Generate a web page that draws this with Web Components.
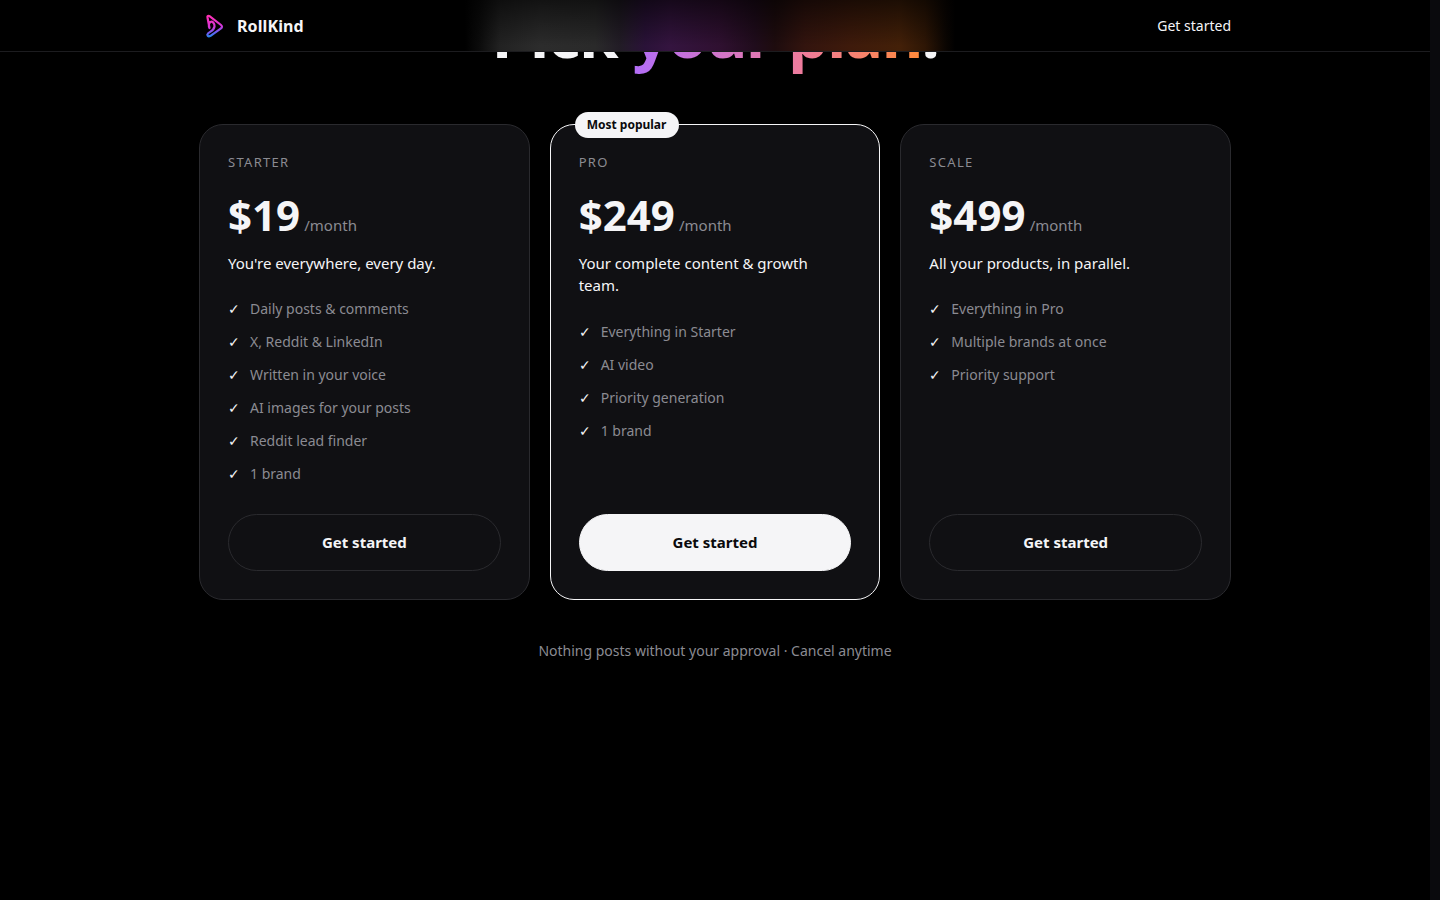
<!DOCTYPE html>
<html lang="en">
<head>
<meta charset="utf-8">
<title>RollKind pricing</title>
<style>
html,body{margin:0;padding:0;height:100%;background:#000;overflow:hidden}
body{font-family:"Noto Sans",sans-serif;color:#f5f5f7}
</style>
</head>
<body>
<rk-page>
  <rk-header slot="header"></rk-header>
  <rk-hero>Pick <span slot="accent">your plan</span></rk-hero>
  <rk-plans>
    <rk-plan name="STARTER" price="$19" tagline="You're everywhere, every day.">
      <li>Daily posts &amp; comments</li><li>X, Reddit &amp; LinkedIn</li><li>Written in your voice</li><li>AI images for your posts</li><li>Reddit lead finder</li><li>1 brand</li>
    </rk-plan>
    <rk-plan featured name="PRO" price="$249" tagline="Your complete content &amp; growth team.">
      <li>Everything in Starter</li><li>AI video</li><li>Priority generation</li><li>1 brand</li>
    </rk-plan>
    <rk-plan name="SCALE" price="$499" tagline="All your products, in parallel.">
      <li>Everything in Pro</li><li>Multiple brands at once</li><li>Priority support</li>
    </rk-plan>
  </rk-plans>
  <rk-note>Nothing posts without your approval · Cancel anytime</rk-note>
</rk-page>
<script>
function def(name, html, init){
  customElements.define(name, class extends HTMLElement{
    constructor(){super();this.attachShadow({mode:'open'}).innerHTML=html;}
    connectedCallback(){ if(init) init(this); }
  });
}
def('rk-page',`<style>
:host{display:flex;height:900px;width:1440px;overflow:hidden;background:#000}
.view{position:relative;width:1430px;height:900px;overflow:hidden;flex:none}
.bar{width:10px;flex:none;background:#0a0a0d}
</style><div class="view"><slot name="header"></slot><slot></slot></div><div class="bar"></div>`);

def('rk-header',`<style>
:host{position:absolute;left:0;top:0;right:0;z-index:5;display:block;height:51px;border-bottom:1px solid #1c1c1f;
background:
linear-gradient(to bottom,rgba(0,0,0,.58),rgba(0,0,0,0) 90%),
linear-gradient(90deg,#000 465px,#0c0c0c 480px,#222 500px,#2c2c2c 540px,#2a2a2a 595px,#221c26 620px,#2a1238 645px,#34143f 670px,#2f1030 720px,#200c1c 755px,#1e0c0e 775px,#33140e 805px,#3e1a0b 850px,#432008 900px,#2e1605 925px,#0c0602 945px,#000 955px),
#000}
.in{box-sizing:border-box;width:1032px;height:51px;margin:0 auto;display:flex;align-items:center;justify-content:space-between}
.brand{display:flex;align-items:center;gap:12px;padding-left:4px;font-size:16px;letter-spacing:.1px;font-weight:700;color:#f5f5f7}
svg{width:22px;height:26px;display:block}
a{font-size:14px;color:#f5f5f7;text-decoration:none}
</style><div class="in"><div class="brand">
<svg viewBox="0 0 22 26" fill="none" stroke-width="2.2" stroke-linecap="round" stroke-linejoin="round">
<defs><linearGradient id="g" gradientUnits="userSpaceOnUse" x1="6" y1="3" x2="9" y2="24"><stop offset="0" stop-color="#ff2fb4"/><stop offset=".55" stop-color="#d436d8"/><stop offset=".8" stop-color="#6a5cf0"/><stop offset="1" stop-color="#1f8df0"/></linearGradient></defs>
<path stroke="url(#g)" d="M6.5 15C5.5 13 5.5 10 7.5 9C9.5 8 11.8 10.5 11.5 13.5C11 17.5 7 18.5 5 20.5C3.5 22 5 24.3 7.5 22.8L18 15.3C19.3 14.5 19.3 13 18 12L6.5 3.2C5.5 2.5 4 3 4.5 4.5L6.5 15"/>
</svg><span>RollKind</span></div><a href="#">Get started</a></div>`);

def('rk-hero',`<style>
:host{display:block;text-align:center;margin-top:-6px;font-size:64px;line-height:80px;font-weight:700;letter-spacing:-1.5px;color:#f5f5f7}
h1{margin:0;font:inherit;letter-spacing:inherit}
.g{background:linear-gradient(90deg,#b26df8 0%,#f07c9a 60%,#ff8a3a 100%);-webkit-background-clip:text;background-clip:text;color:transparent}
</style><h1><slot></slot><span class="g"><slot name="accent"></slot></span>.</h1>`);

def('rk-plans',`<style>
:host{display:grid;grid-template-columns:repeat(3,1fr);gap:20px;width:1032px;margin:50px auto 0}
</style><slot></slot>`);

def('rk-plan',`<style>
:host{display:flex;flex-direction:column;box-sizing:border-box;position:relative;padding:28px;background:#101013;border:1px solid #2a2a2e;border-radius:24px;min-width:0}
:host([featured]){border-color:#f5f5f7}
.badge{display:none;box-sizing:border-box;width:104px;position:absolute;left:24px;top:-13px;height:26px;line-height:26px;padding:0 0 0 12px;border-radius:13px;background:#f5f5f7;color:#0a0a0c;font-size:12px;font-weight:700;white-space:nowrap}
:host([featured]) .badge{display:block}
.name{font-size:13px;line-height:19.5px;letter-spacing:1.3px;color:#8b8b92}
.price{margin-top:17px;display:flex;align-items:baseline;gap:4.2px;line-height:50px;height:50px}
.amt{font-size:42px;font-weight:700;color:#f5f5f7}
.per{font-size:15px;color:#8b8b92}
.tag{margin-top:12.25px;font-size:15px;line-height:22.5px;color:#f5f5f7}
ul{list-style:none;margin:24px 0 0;padding:0;display:flex;flex-direction:column;gap:12px}
::slotted(li){display:flex;font-size:14px;line-height:21px;color:#8b8b92}
.btn{box-sizing:border-box;height:57px;padding-bottom:2px;border:1px solid #2a2a2e;border-radius:999px;display:flex;align-items:center;justify-content:center;font-size:15px;font-weight:700;color:#f5f5f7;background:transparent}
:host([featured]) .btn{background:#f5f5f7;border-color:#f5f5f7;color:#0a0a0c}
.sp{min-height:30px;flex:1}
</style><div class="badge">Most popular</div>
<div class="name"></div>
<div class="price"><span class="amt"></span><span class="per">/month</span></div>
<div class="tag"></div>
<ul><slot></slot></ul><div class="sp"></div>
<div class="btn">Get started</div>`, el=>{
  const s=el.shadowRoot;
  s.querySelector('.name').textContent=el.getAttribute('name');
  s.querySelector('.amt').textContent=el.getAttribute('price');
  s.querySelector('.tag').textContent=el.getAttribute('tagline');
  el.querySelectorAll('li').forEach(li=>{
    if(li.dataset.done) return; li.dataset.done=1;
    const c=document.createElement('span');
    c.textContent='✓';
    c.style.cssText='width:22px;flex:none;color:#f5f5f7';
    li.prepend(c);
  });
});

def('rk-note',`<style>
:host{display:block;text-align:center;margin-top:40px;font-size:14px;line-height:21px;color:#8b8b92}
</style><slot></slot>`);
</script>
</body>
</html>
